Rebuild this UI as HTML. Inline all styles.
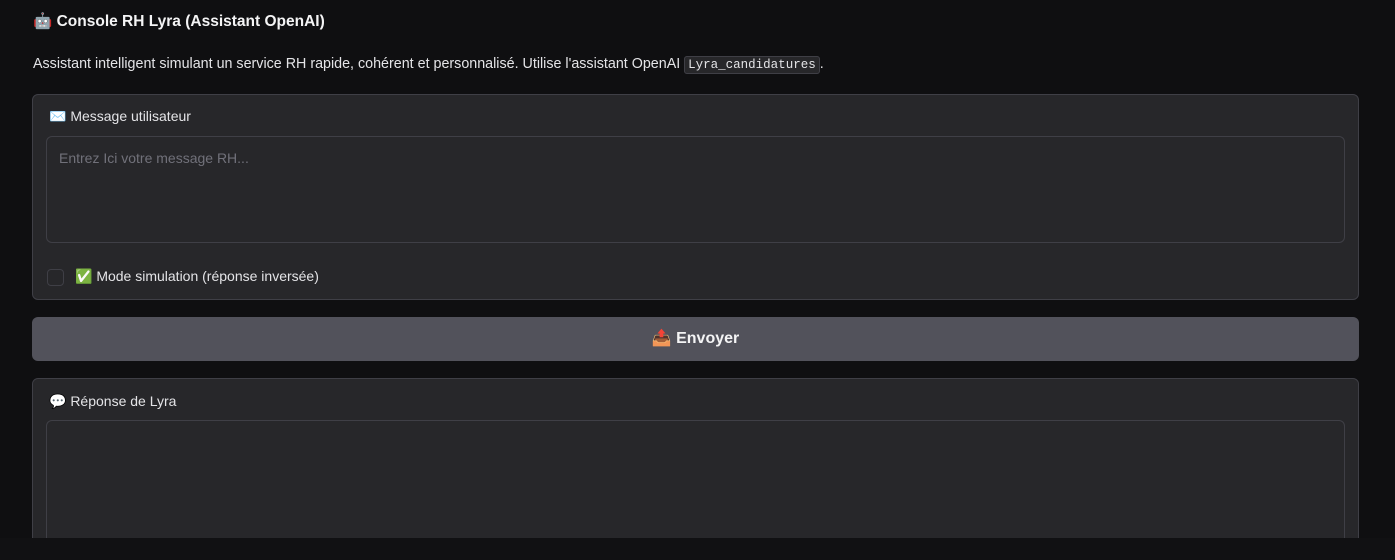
<!DOCTYPE html>
<html><head><meta charset="utf-8"><style>
*{box-sizing:border-box;margin:0;padding:0}
html,body{width:1395px;height:560px;overflow:hidden;background:#0f0f11;font-family:"Liberation Sans",sans-serif;color:#e4e4e7;position:relative}
.title{position:absolute;left:33px;top:12px;font-size:15.5px;font-weight:bold;color:#f4f4f5}
.desc{position:absolute;left:33px;top:56px;font-size:14.3px;color:#e4e4e7}
code{font-family:"Liberation Mono",monospace;font-size:12.5px;background:#27272a;border:1px solid #3f3f46;border-radius:3px;padding:1px 3px}
.panel{position:absolute;left:32px;width:1327px;background:#27272a;border:1px solid #3f3f46;border-radius:6px}
.lbl{position:absolute;left:16px;font-size:14px;color:#e4e4e7}
.ta{position:absolute;left:13px;right:13px;background:#27272a;border:1px solid #3f3f46;border-radius:6px}
.btn{position:absolute;left:32px;top:317px;width:1327px;height:44px;background:#52525b;border-radius:6px;text-align:center;line-height:44px;font-size:16px;font-weight:bold;color:#f4f4f5}
.bottom{position:absolute;left:0;top:538px;width:1395px;height:22px;background:#111113;z-index:5}
</style></head><body>
<div class="title">🤖 Console RH Lyra (Assistant OpenAI)</div>
<div class="desc">Assistant intelligent simulant un service RH rapide, cohérent et personnalisé. Utilise l'assistant OpenAI <code>Lyra_candidatures</code>.</div>
<div class="panel" style="top:94px;height:206px">
  <div class="lbl" style="top:13px">✉️ Message utilisateur</div>
  <div class="ta" style="top:41px;height:107px"><div style="position:absolute;left:12px;top:13px;font-size:14px;color:#71717a">Entrez Ici votre message RH...</div></div>
  <div style="position:absolute;left:14px;top:174px;width:17px;height:17px;border:1px solid #3f3f46;border-radius:4px;background:#27272a"></div>
  <div class="lbl" style="left:42px;top:173px">✅ Mode simulation (réponse inversée)</div>
</div>
<div class="btn">📤 Envoyer</div>
<div class="panel" style="top:378px;height:170px">
  <div class="lbl" style="top:14px">💬 Réponse de Lyra</div>
  <div class="ta" style="top:41px;height:125px"></div>
</div>
<div class="bottom"></div>
</body></html>
